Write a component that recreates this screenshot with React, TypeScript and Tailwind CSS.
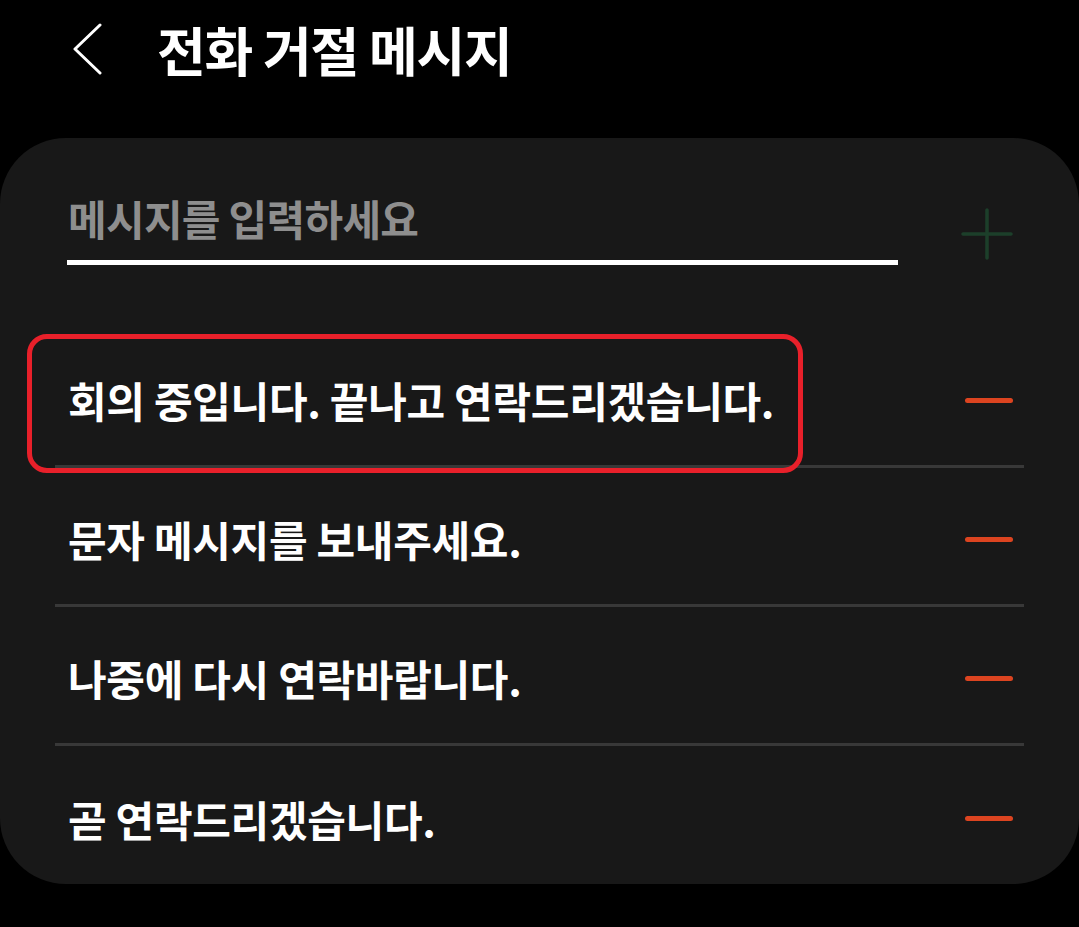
import React from "react";

const font = { fontFamily: '"Noto Sans CJK KR", "Noto Sans", sans-serif' };

const items = [
  "회의 중입니다. 끝나고 연락드리겠습니다.",
  "문자 메시지를 보내주세요.",
  "나중에 다시 연락바랍니다.",
  "곧 연락드리겠습니다.",
];

export default function App() {
  return (
    <div className="w-[1079px] h-[927px] bg-black overflow-hidden" style={font}>
      {/* Header */}
      <div className="h-[138px] flex items-start pt-[22px]">
        <div className="pl-[72px] w-[157px] pt-[1px]">
          <svg width="32" height="52" viewBox="0 0 32 52">
            <path d="M28 2 L3 26 L28 50" fill="none" stroke="#ffffff" strokeWidth="3" strokeLinecap="round" strokeLinejoin="round" />
          </svg>
        </div>
        <div className="text-white font-bold text-[53px] leading-[54px] tracking-[-1.2px]">전화 거절 메시지</div>
      </div>

      {/* Card */}
      <div className="relative bg-[#181818] rounded-[66px] w-[1079px] h-[746px]">
        {/* input row */}
        <div className="h-[191px] flex">
          <div className="pl-[67px] w-[898px] pt-[56px]">
            <div className="text-[#8e8e8e] font-bold text-[42px] leading-[48px] tracking-[-0.7px] pl-[1px]">메시지를 입력하세요</div>
            <div className="mt-[18px] h-[5px] bg-white" />
          </div>
          <div className="flex-1 flex justify-center pt-[70px] pr-[4px]">
            <svg width="52" height="52" viewBox="0 0 52 52">
              <path d="M26 2 V50 M2 26 H50" stroke="#1c3f2a" strokeWidth="3.5" strokeLinecap="round" />
            </svg>
          </div>
        </div>

        {/* list */}
        <div className="px-[55px]">
          {items.map((t, i) => (
            <div key={i} className={`h-[139px] flex items-center pt-[6px] ${i < items.length - 1 ? "border-b-[3px] border-[#383838]" : ""}`}>
              <div className="pl-[13px] flex-1 text-white font-semibold text-[42px] tracking-[-0.3px] leading-[50px]">{t}</div>
              <div className="w-[48px] h-[5px] rounded-full bg-[#dc4420] mr-[11px]" />
            </div>
          ))}
        </div>

        {/* annotation */}
        <div className="absolute left-[27px] top-[196px] w-[776px] h-[139px] border-[5px] border-[#e8202a] rounded-[20px]" />
      </div>
    </div>
  );
}
